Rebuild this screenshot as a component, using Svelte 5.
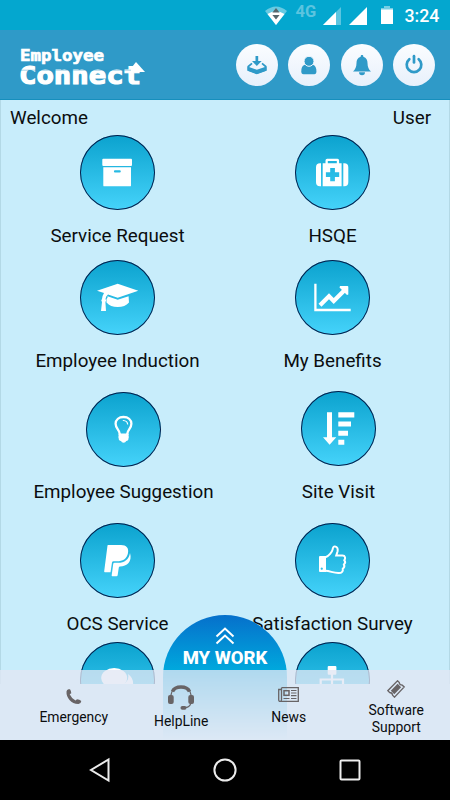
<script lang="ts">
let tiles = $state([
  [{ label: "Service Request", icon: "archive" }, { label: "HSQE", icon: "medkit" }],
  [{ label: "Employee Induction", icon: "cap" }, { label: "My Benefits", icon: "chart" }],
  [{ label: "Employee Suggestion", icon: "bulb" }, { label: "Site Visit", icon: "sort" }],
  [{ label: "OCS Service", icon: "pay" }, { label: "Satisfaction Survey", icon: "thumb" }],
  [{ label: "", icon: "comments" }, { label: "", icon: "sitemap" }],
]);

const actions = ["inbox", "user", "bell", "power"];

const tabs = [
  { label: "Emergency", icon: "phone" },
  { label: "HelpLine", icon: "headset" },
  { label: "News", icon: "news" },
  { label: "Software Support", icon: "ticket" },
];
</script>

<div class="screen">
  <div class="status">
    <svg class="wifi" width="22" height="19" viewBox="0 0 22 19">
      <path d="M0 5Q11-4 22 5L11 19Z" fill="#fff" opacity=".4" />
      <path d="M2.5 8Q11 2.500 19.500 8L11 19Z" fill="#fff" />
      <path d="M11 2l3.600 4.500H7.400zM11 13.500L7.400 9h7.200z" fill="#55666c" />
    </svg>
    <span class="net">4G</span>
    <svg class="signal" width="18" height="18" viewBox="0 0 18 18">
      <path d="M0 18L18 0V18Z" fill="#fff" opacity=".35" />
      <path d="M0 18L13 5V18Z" fill="#fff" />
    </svg>
    <svg class="signal2" width="18" height="18" viewBox="0 0 18 18">
      <path d="M0 18L18 0V18Z" fill="#fff" />
    </svg>
    <svg class="battery" width="12" height="18" viewBox="0 0 12 18">
      <path d="M3 0h6v2h3v2H0V2h3z" fill="#fff" opacity=".45" />
      <path d="M0 3.500h12V18H0z" fill="#fff" />
    </svg>
    <span class="time">3:24</span>
  </div>

  <header>
    <svg class="logo" width="128" height="50" viewBox="0 0 128 50">
      <g fill="#fff" stroke="#fff" font-family="'DejaVu Sans Mono', monospace" font-weight="bold">
        <text x="0" y="16" font-size="16.500" stroke-width=".7" textLength="84" lengthAdjust="spacingAndGlyphs">Employee</text>
        <text x="-1" y="38.500" font-size="24.500" stroke-width="1.200" textLength="122" lengthAdjust="spacingAndGlyphs">Connect</text>
      </g>
      <path d="M112 26V22L116 17L125 27H112Z" fill="#fff" />
      <path d="M0 25.200H111" stroke="#2f9ac8" stroke-width=".7" opacity=".6" />
    </svg>
    <div class="actions">
      {#each actions as action}
        <button class="action" aria-label={action}>
          <svg width="42" height="42" viewBox="0 0 42 42" fill="#2f9ac8">
            {#if action === "inbox"}
              <path d="M19.500 12h2.700v5h3.500L20.800 22 16 17h3.500z" />
              <path d="M16 19.300L12.300 22.500V26L20.800 29 29.700 26V22.500L26 19.300" fill="none" stroke="#2f9ac8" stroke-width="1.700" />
              <path d="M11.500 22.500L20.800 25.700 30.500 22.500V26.700L20.800 30.200 11.500 26.700Z" />
            {:else if action === "user"}
              <path d="M16.600 20.700C14 21.500 13.300 24 13.300 27.500C13.300 29.300 14 30.200 15.500 30.200H26.300C27.700 30.200 28.400 29.300 28.400 27.500C28.400 24 27.500 21.500 25.200 20.700Z" />
              <circle cx="21" cy="17.300" r="5" stroke="#f5f9fe" stroke-width="1" />
            {:else if action === "bell"}
              <path d="M21 11C22 11 22.400 11.700 22.300 12.700C25.500 13.700 26.500 16 26.500 19C26.500 23 27.800 25.700 30 27.600H12C14.200 25.700 15.500 23 15.500 19C15.500 16 16.500 13.700 19.700 12.700C19.600 11.700 20 11 21 11Z" />
              <path d="M18 28.200h6a3 3 0 0 1-6 0z" />
            {:else}
              <path d="M16.300 15.200A7.300 7.300 0 1 0 25.700 15.200" fill="none" stroke="#2f9ac8" stroke-width="2.700" stroke-linecap="round" />
              <path d="M21 12.200V18.500" stroke="#2f9ac8" stroke-width="2.700" stroke-linecap="round" />
            {/if}
          </svg>
        </button>
      {/each}
    </div>
  </header>

  <main>
    <div class="welcome"><span>Welcome</span><span>User</span></div>
    {#each tiles as row, num}
      <div class="row row{num + 1}">
        {#each row as tile}
          <div class="tile">
            <div class="circle">
              <svg width="75" height="75" viewBox="0 0 75 75" fill="#fff">
                {#if tile.icon === "archive"}
                  <rect x="22.300" y="23.700" width="29.700" height="7.300" rx="1" />
                  <path d="M23.300 32.300H51V50.400Q51 51.300 50 51.300H24.300Q23.300 51.300 23.300 50.400ZM35 35.300a1 1 0 0 0 0 2.200h4.700a1 1 0 0 0 0-2.200z" fill-rule="evenodd" />
                {:else if tile.icon === "medkit"}
                  <path d="M26 28.300V51.300H25Q21 51.300 21 47.300V32.300Q21 28.300 25 28.300ZM48.300 28.300V51.300H49.300Q53.300 51.300 53.300 47.300V32.300Q53.300 28.300 49.300 28.300Z" />
                  <path d="M27.700 28.300H30.500V25.400Q30.500 23.700 32.200 23.700H42.400Q44.100 23.700 44.100 25.400V28.300H46.600V51.300H27.700ZM32.800 26V28.300H41.800V26ZM35.200 33V37.300H30.900V42H35.200V46.300H39.900V42H44.200V37.300H39.900V33Z" fill-rule="evenodd" />
                {:else if tile.icon === "cap"}
                  <path d="M17 30.700L37.700 23.700 58.300 30.700 37.700 37.800 28 34.500Q25.800 36 25.500 39Q27 40.500 25.400 42L26 51H21L22 42Q20.500 40.500 22 39Q22.200 36 24 33.100Z" />
                  <path d="M27.500 36.300L37.700 39.800 48.600 36.200 49 42.500Q45 47 37.700 47T26.500 42.500V39Q28 38 27.500 36.300Z" />
                {:else if tile.icon === "chart"}
                  <path d="M20.400 23.700V50H55.700" fill="none" stroke="#fff" stroke-width="2.300" />
                  <path d="M25 45.300L34 36.300 38.700 41 50 29.700" fill="none" stroke="#fff" stroke-width="4.200" />
                  <path d="M45 26H52.500Q53.300 26 53.300 27V34.500L52 35 44.500 27.500Z" />
                {:else if tile.icon === "bulb"}
                  <path d="M33.800 42C33.500 38 29.600 36.500 29.600 31.800C29.600 27.500 33 25 37.500 25S45.400 27.500 45.400 31.800C45.400 36.500 41.500 38 41.200 42" fill="none" stroke="#fff" stroke-width="2.300" />
                  <path d="M37.300 28.500Q41.300 28.800 41.600 32" fill="none" stroke="#fff" stroke-width="1.200" stroke-linecap="round" />
                  <path d="M32.700 41.500h9.800q.8 1.200 0 2.300q.8 1.200 0 2.400q.3 2.300-2.300 2.800q-.6 1.800-2.600 1.800t-2.600-1.800q-2.600-.5-2.300-2.800q-.8-1.200 0-2.400q-.8-1.100 0-2.300z" />
                {:else if tile.icon === "sort"}
                  <path d="M26 21.300h5v25h4.300L28.600 53.700 22 46.300h4zM37.300 21.300h16v5.200h-16zM37.300 30.500h12.700v5H37.300zM37.300 39.700h9.700v5h-9.700zM37.300 48.700h6v5h-6z" />
                {:else if tile.icon === "pay"}
                  <path d="M28 22H41C46.500 22 49 25 48 30C47 36 42.500 38.300 37 38.300H33.500Q32.300 38.300 32 39.500L30.500 49.300H24.900Q24 49.300 24.200 48.300L27.500 22.500Q27.600 22 28 22Z" />
                  <path d="M50 30C52.500 38.500 47 43.500 40 43.500Q39 43.500 38.800 44.500L37.700 52Q37.500 53.300 36.500 53.300H32.300Q31.500 53.300 31.700 52.300L33.200 41Q33.400 39.800 34.500 39.800H38C44.500 39.800 49 36.500 50 30Z" />
                {:else if tile.icon === "thumb"}
                  <path d="M25 33H31V49H25Q24 49 24 48V34Q24 33 25 33ZM26.700 44.500a1.100 1.100 0 1 0 .1 0z" fill-rule="evenodd" />
                  <path d="M30.500 34.200C33.500 33.500 37.400 28.500 37.600 26.500C38 23.700 38.600 23.300 40 23.400C42.500 23.600 43 26 42.600 28.200L41.200 32.600H47.500C50.300 32.600 50.800 35.400 49.300 37.200C50.600 38.700 50.200 40.300 48.900 41.500C49.800 43.200 49.200 44.700 47.800 45.700C48.300 48.300 46.700 50 44 50C38.500 50.300 35.500 48 30.500 47.800" fill="none" stroke="#fff" stroke-width="2" />
                {:else if tile.icon === "comments"}
                  <path d="M48 32Q54 36 53 44H40Q50 40 48 32Z" />
                  <ellipse cx="34.200" cy="36" rx="13" ry="10" />
                {:else}
                  <rect x="32.700" y="24" width="8.700" height="8.700" rx="1" />
                  <path d="M37 32V44M25.700 44V37.500H48V44" fill="none" stroke="#fff" stroke-width="2.200" />
                {/if}
              </svg>
            </div>
            <p>{tile.label}</p>
          </div>
        {/each}
      </div>
    {/each}
  </main>

  <div class="work">
    <svg width="20" height="18" viewBox="0 0 20 18" fill="none" stroke="#fff" stroke-width="2">
      <path d="M1.500 9.500L10 1.500 18.500 9.500M1.500 16.500L10 8.500 18.500 16.500" />
    </svg>
    <span>MY WORK</span>
  </div>

  <footer>
    {#each tabs as tab}
      <div class="tab {tab.icon}">
        {#if tab.icon === "phone"}
          <svg width="16" height="16" viewBox="0 0 16 16" fill="#686466">
            <path d="M2.500.3L4 .2Q5.500 2.500 5.300 4.200L3.700 5.300Q5.500 9.500 9.500 11.500L11 10.200Q13.500 10.300 15.300 12Q15 14.800 12.500 15.100Q7 15.200 3.500 11Q.2 7 .5 2.500Q.8.8 2.500.3Z" />
          </svg>
        {:else if tab.icon === "headset"}
          <svg width="26" height="25" viewBox="0 0 26 25" fill="#686466">
            <path d="M4.500 6.500Q6.500 2 13 2T21.500 6.500" fill="none" stroke="#686466" stroke-width="3.500" />
            <path d="M3 10Q3.500 6 6 4M23 10Q22.500 6 20 4M23 16Q23 22.500 17 22.700" fill="none" stroke="#686466" stroke-width="1.300" />
            <rect x="0" y="10" width="5.700" height="9" rx="2" />
            <rect x="20.300" y="10" width="5.700" height="9" rx="2" />
            <rect x="12.500" y="21" width="6" height="3.700" rx="1.800" />
          </svg>
        {:else if tab.icon === "news"}
          <svg width="21" height="15" viewBox="0 0 21 15" fill="none" stroke="#686466">
            <path d="M3.500.7H20.300V14.300H2.200Q.7 14.300.7 12.800V2.500H3.500M3.500.7V12.800Q3.500 14.300 2.200 14.300" stroke-width="1.300" />
            <rect x="6" y="3.700" width="5" height="4.600" stroke-width="1.500" />
            <path d="M13 3.500h5.500M13 6h5.500M13 8.600h5.500M5.500 11.500h6M13 11.500h5.500" stroke-width="1.200" />
          </svg>
        {:else}
          <svg width="18" height="18" viewBox="0 0 18 18" fill="none" stroke="#686466">
            <path d="M10.500.8L12.300 2.600Q12.200 4.800 15.300 5.200L17.200 7 7.500 17.200 5.600 15.300Q5.500 12.700 2.700 12.500L.8 10.700Z" stroke-width="1.300" />
            <path d="M10.600 3.800L14.100 7.300 7.300 14.200 3.800 10.700Z" fill="#686466" stroke="none" />
          </svg>
        {/if}
        <span>{tab.label}</span>
      </div>
    {/each}
  </footer>

  <nav>
    <svg width="22" height="26" viewBox="0 0 22 26"><path d="M19.500 2.500V23.500L2 13Z" /></svg>
    <svg width="26" height="26" viewBox="0 0 26 26"><circle cx="13" cy="13" r="10.600" /></svg>
    <svg width="22" height="26" viewBox="0 0 22 26"><rect x="1.500" y="3.500" width="19" height="19" rx="1" /></svg>
  </nav>
</div>

<style>
:global(body) {
  margin: 0;
}
.screen {
  position: relative;
  display: flex;
  flex-direction: column;
  width: 450px;
  height: 800px;
  overflow: hidden;
  background: #c8edfb;
  color: #0b0d0f;
  font-family: Roboto, sans-serif;
}
svg {
  display: block;
  flex: none;
}
.status {
  display: flex;
  height: 30px;
  flex: none;
  padding-left: 265px;
  background: #04a7cf;
  color: #fff;
}
.wifi {
  margin-top: 6px;
}
.net {
  width: 27px;
  padding-left: 8.5px;
  color: #5cc4df;
  font-size: 16.5px;
  font-weight: 700;
  line-height: 23px;
}
.signal,
.signal2 {
  margin-top: 7px;
}
.signal2 {
  margin-left: 8px;
}
.battery {
  margin: 6px 0 0 14px;
}
.time {
  margin-left: 12px;
  font-size: 17.7px;
  font-weight: 500;
  line-height: 32px;
}
header {
  display: flex;
  justify-content: space-between;
  box-sizing: border-box;
  height: 70px;
  flex: none;
  padding: 14px 15px 0 20px;
  border-bottom: 1px solid #168fbd;
  background: #2f9ac8;
}
.logo {
  margin-top: 1px;
  overflow: visible;
}
.actions {
  display: flex;
  gap: 10.500px;
}
.action {
  width: 42px;
  height: 42px;
  padding: 0;
  border: 0;
  border-radius: 50%;
  background: linear-gradient(#fbfdff, #e7f0fb);
}
main {
  box-sizing: border-box;
  height: 584px;
  flex: none;
  overflow: hidden;
  border-left: 1px solid #b3d9e6;
  border-right: 1px solid #b3d9e6;
}
.welcome {
  display: flex;
  justify-content: space-between;
  height: 35px;
  padding: 0 18px 0 9px;
  font-size: 18.8px;
  line-height: 36px;
}
.row {
  display: grid;
  grid-template-columns: 235px 195px;
  height: 125px;
  margin-left: -1px;
}
.row2 {
  height: 131px;
}
.row3 {
  height: 132px;
  padding-left: 6px;
}
.row3 .tile:first-child .circle {
  margin-top: 1px;
  margin-bottom: -1px;
}
.row4 {
  height: 119px;
}
.tile {
  display: flex;
  flex-direction: column;
  align-items: center;
}
.circle {
  box-sizing: border-box;
  width: 75px;
  height: 75px;
  flex: none;
  border-radius: 50%;
  background: linear-gradient(#0ba2ce, #45d3fa);
  box-shadow: inset 0 0 0 1px #071e4a;
}
.tile p {
  margin: 14px 0 0;
  font-size: 18.8px;
  line-height: 25px;
  white-space: nowrap;
}
.work {
  position: absolute;
  left: 163px;
  top: 615px;
  display: flex;
  flex-direction: column;
  align-items: center;
  box-sizing: border-box;
  width: 124px;
  height: 125px;
  padding-top: 12px;
  border-radius: 62px 62px 0 0;
  background: linear-gradient(#0670cb, #00a8dd 44%, rgba(0, 168, 221, 0));
  color: #fff;
}
.work span {
  margin-top: 1px;
  font-size: 18.5px;
  font-weight: 800;
  line-height: 24px;
}
footer {
  position: relative;
  display: flex;
  box-sizing: border-box;
  height: 70px;
  flex: none;
  margin-top: -14px;
  padding-left: 20px;
  background: rgba(225, 231, 243, 0.78);
}
.tab {
  display: flex;
  flex-direction: column;
  align-items: center;
  width: 107.5px;
  font-size: 13.9px;
  line-height: 16.5px;
  text-align: center;
}
.tab span {
  width: 80px;
  margin-top: 4px;
}
.phone svg {
  margin-top: 19px;
}
.headset svg {
  margin-top: 15px;
}
.tab.headset span {
  margin-top: 3px;
}
.news svg {
  margin-top: 17px;
}
.tab.news span {
  margin-top: 7px;
}
.ticket svg {
  margin-top: 10px;
}
nav {
  display: flex;
  justify-content: space-between;
  height: 43px;
  padding: 17px 89px 0;
  background: #000;
}
nav svg {
  fill: none;
  stroke: #ececec;
  stroke-width: 2;
}
</style>
